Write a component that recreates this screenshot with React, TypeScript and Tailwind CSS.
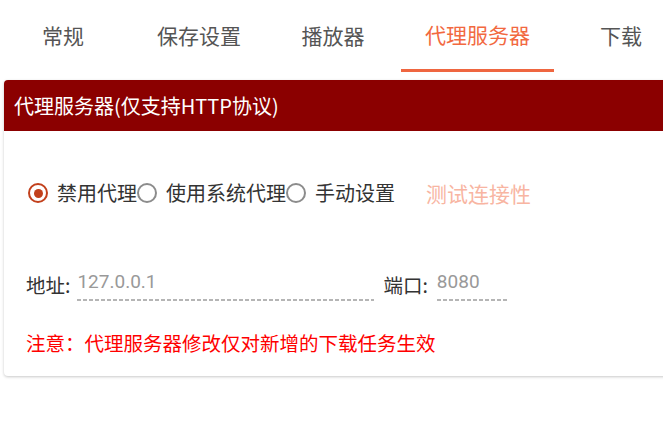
import React from "react";

const CJK = "font-['Noto_Sans_CJK_SC','Noto_Sans',sans-serif]";

function Radio({ checked, label }: { checked?: boolean; label: string }) {
  return (
    <div className="flex items-center">
      <span
        className={
          checked
            ? "flex h-[20px] w-[20px] items-center justify-center rounded-full border-[2.5px] border-[#c2401c]"
            : "flex h-[20px] w-[20px] items-center justify-center rounded-full border-[2.5px] border-[#8c8c8c]"
        }
      >
        {checked && <span className="h-[9px] w-[9px] rounded-full bg-[#c2401c]" />}
      </span>
      <span className="ml-[9px] text-[20px] leading-[30px] text-[#333]">{label}</span>
    </div>
  );
}

const dash =
  "h-[2px] bg-[repeating-linear-gradient(to_right,#b5b5b5_0,#b5b5b5_4px,transparent_4px,transparent_6px)]";

export default function App() {
  return (
    <div className={`h-[430px] w-[663px] overflow-hidden bg-white ${CJK}`}>
      {/* Tabs */}
      <div className="flex h-[72px] whitespace-nowrap">
        <div className="flex w-[126px] shrink-0 items-center justify-center text-[21px] text-[#555]">常规</div>
        <div className="flex w-[146px] shrink-0 items-center justify-center text-[21px] text-[#555]">保存设置</div>
        <div className="flex w-[122px] shrink-0 items-center justify-center text-[21px] text-[#555]">播放器</div>
        <div className="ml-[7px] flex w-[153px] shrink-0 flex-col">
          <div className="flex flex-1 items-center justify-center text-[21px] text-[#f2693f]">代理服务器</div>
          <div className="h-[3px] bg-[#ef6640]" />
        </div>
        <div className="flex w-[134px] shrink-0 items-center justify-center text-[21px] text-[#555]">下载</div>
      </div>

      {/* Card */}
      <div className="ml-[4px] mt-[8px] w-[700px] rounded-[4px] bg-white shadow-[0_1px_3px_rgba(0,0,0,0.22)]">
        <div className="flex h-[51px] items-center whitespace-nowrap rounded-t-[4px] bg-[#8b0000] pl-[10px] text-[20px] text-white">
          代理服务器(仅支持HTTP协议)
        </div>
        <div className="px-[22px] pb-[21px] pt-[47px]">
          <div className="ml-[2px] flex h-[30px] items-center whitespace-nowrap">
            <Radio checked label="禁用代理" />
            <Radio label="使用系统代理" />
            <Radio label="手动设置" />
            <span className="ml-[31px] text-[21px] leading-[30px] text-[#f8b5a2]">测试连接性</span>
          </div>

          <div className="mt-[64px] flex items-end whitespace-nowrap">
            <span className="mb-[6px] text-[19.5px] leading-[20px] text-[#333]">地址:</span>
            <div className="ml-[7px] flex w-[297px] flex-col">
              <span className="font-['Roboto',sans-serif] text-[19px] leading-[20px] text-[#999]">127.0.0.1</span>
              <div className={`mt-[7px] ${dash}`} />
            </div>
            <span className="mb-[6px] ml-[9px] text-[19.5px] leading-[20px] text-[#333]">端口:</span>
            <div className="ml-[9px] flex w-[71px] flex-col">
              <span className="font-['Roboto',sans-serif] text-[19px] leading-[20px] text-[#999]">8080</span>
              <div className={`mt-[7px] ${dash}`} />
            </div>
          </div>

          <div className="mt-[30px] whitespace-nowrap text-[19.5px] leading-[24px] text-[#ff0000]">
            注意：代理服务器修改仅对新增的下载任务生效
          </div>
        </div>
      </div>
    </div>
  );
}
